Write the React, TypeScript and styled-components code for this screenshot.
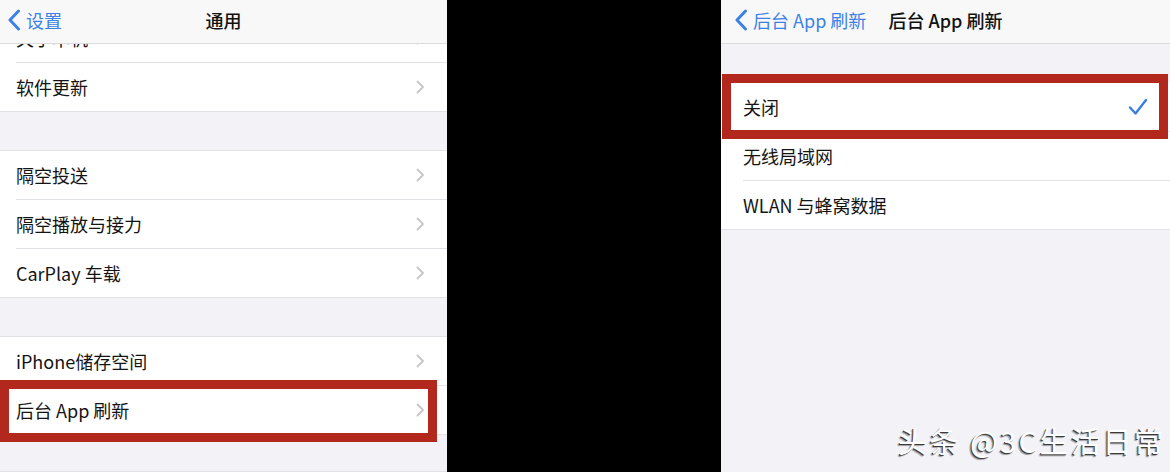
import React from 'react'
import styled, { createGlobalStyle } from 'styled-components'

const GlobalStyle = createGlobalStyle`
  html, body {
    margin: 0;
    padding: 0;
    background: #000;
  }
  body {
    font-family: "Noto Sans CJK SC", "Noto Sans", sans-serif;
    -webkit-font-smoothing: antialiased;
  }
`

const Page = styled.div`
  position: relative;
  width: 1170px;
  height: 472px;
  display: grid;
  grid-template-columns: 447px 274px 449px;
  background: #000;
  overflow: hidden;
`

const Screen = styled.div`
  display: flex;
  flex-direction: column;
  height: 472px;
  background: #f2f2f7;
  overflow: hidden;
`

const Gutter = styled.div`
  background: #000;
`

const NavBar = styled.div`
  position: relative;
  z-index: 2;
  flex: 0 0 44px;
  display: grid;
  grid-template-columns: 1fr auto 1fr;
  align-items: center;
  padding-bottom: 4px;
  background: rgba(248, 248, 249, 0.96);
  border-bottom: 1px solid #dcdce0;
  box-sizing: border-box;
`

const BackLink = styled.div<{ $pad: number }>`
  display: flex;
  align-items: center;
  gap: 5px;
  padding-left: ${(p) => p.$pad}px;
  color: #3c82e6;
  font-size: 18px;
  white-space: nowrap;
`

const Title = styled.div`
  color: #111;
  font-size: 18px;
  font-weight: 500;
  white-space: nowrap;
`

const Scroll = styled.div`
  flex: 1;
  overflow: hidden;
`

const List = styled.div<{ $shift: number }>`
  margin-top: ${(p) => p.$shift}px;
  display: flex;
  flex-direction: column;
`

const Group = styled.div<{ $gap: number }>`
  margin-top: ${(p) => p.$gap}px;
  background: #fff;
  border-top: 1px solid #e2e2e6;
  border-bottom: 1px solid #e2e2e6;
  &:first-child {
    border-top: none;
  }
`

const Row = styled.div<{ $inset?: number; $marked?: 'left' | 'right' }>`
  position: relative;
  height: 48px;
  display: flex;
  align-items: center;
  justify-content: space-between;
  padding: 0 22px 0 ${(p) => p.$inset ?? 16}px;
  background: #fff;
  color: #141414;
  font-size: 18px;

  & + & {
    border-top: 1px solid #e2e2e6;
    background-clip: padding-box;
  }
  & + &::before {
    content: '';
    position: absolute;
    left: 0;
    top: -1px;
    width: ${(p) => p.$inset ?? 16}px;
    height: 1px;
    background: #fff;
  }

  ${(p) =>
    p.$marked === 'left' &&
    `
    &::after {
      content: '';
      position: absolute;
      z-index: 1;
      left: 0;
      right: 10px;
      top: -6px;
      bottom: -8px;
      border: 9px solid #b3281d;
      box-sizing: border-box;
    }
  `}
  ${(p) =>
    p.$marked === 'right' &&
    `
    &::after {
      content: '';
      position: absolute;
      z-index: 1;
      left: 1px;
      right: 2px;
      top: -9px;
      bottom: -8px;
      border: 9px solid #b3281d;
      box-sizing: border-box;
    }
  `}
`

const Watermark = styled.div`
  position: absolute;
  left: 898px;
  top: 419px;
  color: #fff;
  font-size: 29px;
  letter-spacing: 2.5px;
  white-space: nowrap;
  text-shadow: -1px 1px 0 #3a3a3a, -2px 2px 1px rgba(0, 0, 0, 0.35);
`

function BackChevron() {
  return (
    <svg width="14" height="22" viewBox="0 0 14 22">
      <path d="M11.5 2 L3 11 L11.5 20" fill="none" stroke="#3c82e6" strokeWidth="3" strokeLinecap="round" strokeLinejoin="round" />
    </svg>
  )
}

function Chevron() {
  return (
    <svg width="9" height="14" viewBox="0 0 9 14">
      <path d="M1.5 1.5 L7 7 L1.5 12.5" fill="none" stroke="#c6c6cb" strokeWidth="1.8" strokeLinecap="round" strokeLinejoin="round" />
    </svg>
  )
}

function Check() {
  return (
    <svg width="20" height="18" viewBox="0 0 20 18">
      <path d="M2 9.5 L7.5 15.5 L18 2" fill="none" stroke="#3a7ee0" strokeWidth="2.4" strokeLinecap="round" strokeLinejoin="round" />
    </svg>
  )
}

function GeneralScreen() {
  return (
    <Screen>
      <NavBar>
        <BackLink $pad={7}>
          <BackChevron />
          设置
        </BackLink>
        <Title>通用</Title>
        <div />
      </NavBar>
      <Scroll>
        <List $shift={-30}>
          <Group $gap={0}>
            <Row>
              关于本机
              <Chevron />
            </Row>
            <Row>
              软件更新
              <Chevron />
            </Row>
          </Group>
          <Group $gap={38}>
            <Row>
              隔空投送
              <Chevron />
            </Row>
            <Row>
              隔空播放与接力
              <Chevron />
            </Row>
            <Row>
              CarPlay 车载
              <Chevron />
            </Row>
          </Group>
          <Group $gap={38}>
            <Row>
              iPhone储存空间
              <Chevron />
            </Row>
            <Row $marked="left">
              后台 App 刷新
              <Chevron />
            </Row>
          </Group>
          <Group $gap={36}>
            <Row />
          </Group>
        </List>
      </Scroll>
    </Screen>
  )
}

function RefreshScreen() {
  return (
    <Screen>
      <NavBar>
        <BackLink $pad={13}>
          <BackChevron />
          后台 App 刷新
        </BackLink>
        <Title>后台 App 刷新</Title>
        <div />
      </NavBar>
      <Scroll>
        <List $shift={39}>
          <Group $gap={0}>
            <Row $inset={22} $marked="right">
              关闭
              <Check />
            </Row>
            <Row $inset={22}>无线局域网</Row>
            <Row $inset={22}>WLAN 与蜂窝数据</Row>
          </Group>
        </List>
      </Scroll>
    </Screen>
  )
}

export default function App() {
  return (
    <>
      <GlobalStyle />
      <Page>
        <GeneralScreen />
        <Gutter />
        <RefreshScreen />
        <Watermark>头条 @3C生活日常</Watermark>
      </Page>
    </>
  )
}
